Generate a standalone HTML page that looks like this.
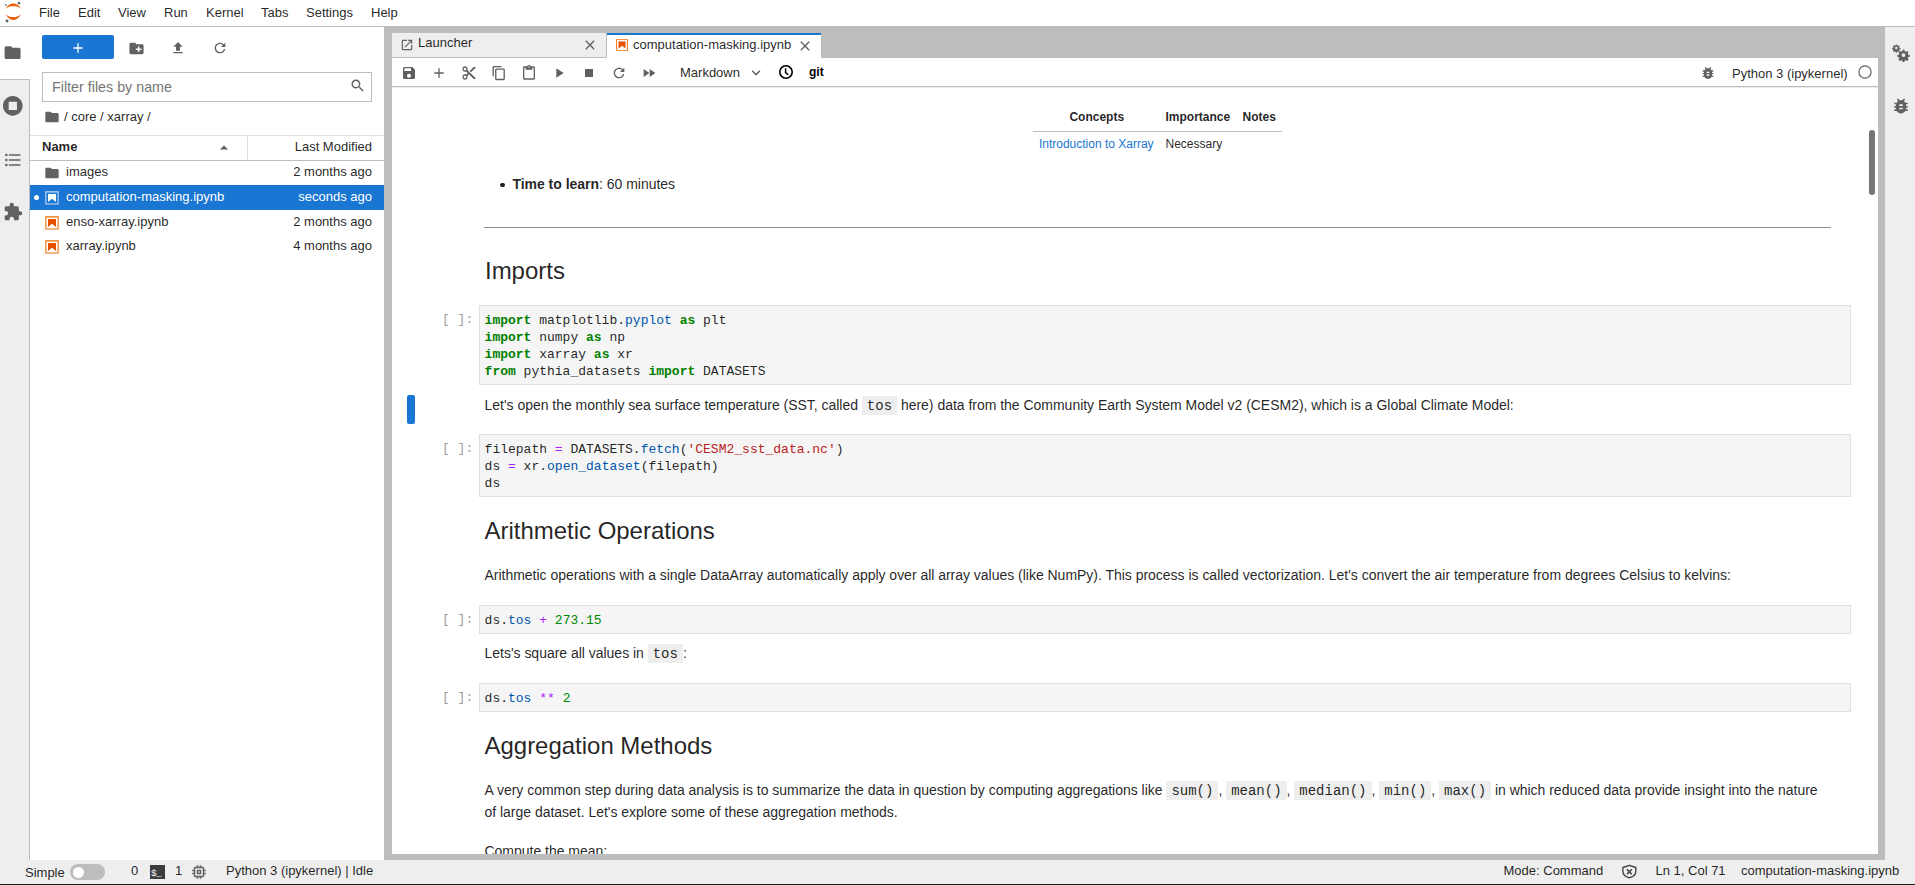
<!DOCTYPE html>
<html><head><meta charset="utf-8">
<style>
*{box-sizing:border-box;}
html,body{margin:0;padding:0;}
body{width:1915px;height:885px;overflow:hidden;position:relative;background:#fff;font-family:"Liberation Sans",sans-serif;color:rgba(0,0,0,0.87);}
.a{position:absolute;}
svg{display:block;}
.ic{fill:#616161;}
/* menu */
#menubar{left:0;top:0;width:1915px;height:27px;background:#fff;border-bottom:1px solid #bdbdbd;}
.mi{position:absolute;top:0;font-size:13px;line-height:26px;color:rgba(0,0,0,0.87);white-space:nowrap;}
/* left sidebar */
#lsb{left:0;top:27px;width:30px;height:833px;background:#eee;}
/* file browser */
#fb{left:30px;top:27px;width:354px;height:833px;background:#fff;}
.t13{font-size:13px;white-space:nowrap;}
/* main */
#dock{left:384px;top:27px;width:1501px;height:833px;background:#bdbdbd;}
#rsb{left:1885px;top:27px;width:30px;height:833px;background:#eee;}
#status{left:0;top:860px;width:1915px;height:24px;background:#eee;}
#blk{left:0;top:884px;width:1915px;height:1px;background:#1a1a1a;}
.md{font-size:14px;white-space:nowrap;color:rgba(0,0,0,0.87);letter-spacing:-0.02px;}
.code{font-family:"Liberation Mono",monospace;font-size:13px;line-height:17px;white-space:pre;color:rgba(0,0,0,0.87);}
.cell{position:absolute;left:479px;width:1372px;background:#f5f5f5;border:1px solid #e0e0e0;}
.pr{position:absolute;left:444px;font-family:"Liberation Mono",monospace;font-size:13px;line-height:17px;color:#9e9e9e;white-space:pre;}
.kw{color:#008000;font-weight:bold;}
.op{color:#aa22ff;}
.pp{color:#0055aa;}
.nu{color:#008800;}
.st{color:#ba2121;}
.ic2{font-family:"Liberation Mono",monospace;font-size:14px;line-height:1;background:#eee;padding:1.7px 5px 1.4px;letter-spacing:0;}
</style></head>
<body>
<div id="menubar" class="a">
<svg class="a" style="left:0;top:0" width="26" height="26" viewBox="0 0 26 26">
 <path d="M5.9 8.8C7.5 5 10.5 3.6 13.35 3.6C16.2 3.6 19.2 5 20.8 8.8C19 6.8 16.3 6.2 13.35 6.2C10.4 6.2 7.7 6.8 5.9 8.8Z" fill="#e9600f"/>
 <path d="M5.9 14.2C7.5 18 10.5 20 13.35 20C16.2 20 19.2 18 20.8 14.2C19 16.3 16.3 17.1 13.35 17.1C10.4 17.1 7.7 16.3 5.9 14.2Z" fill="#e9600f"/>
 <circle cx="19" cy="3.1" r="1.35" fill="#616161"/>
 <circle cx="6" cy="4.9" r="0.9" fill="#767677"/>
 <circle cx="7.1" cy="21" r="1.4" fill="#616161"/>
</svg>
<span class="mi" style="left:39px">File</span>
<span class="mi" style="left:78px">Edit</span>
<span class="mi" style="left:118px">View</span>
<span class="mi" style="left:164px">Run</span>
<span class="mi" style="left:206px">Kernel</span>
<span class="mi" style="left:261px">Tabs</span>
<span class="mi" style="left:306px">Settings</span>
<span class="mi" style="left:371px">Help</span>
</div>
<div id="lsb" class="a">
<div class="a" style="left:0;top:0;width:30px;height:52px;background:#fff"></div>
<div class="a" style="left:0;top:52px;width:30px;height:1px;background:#bdbdbd"></div>
<div class="a" style="left:29px;top:52px;width:1px;height:781px;background:#bdbdbd"></div>
<svg class="a ic" style="left:3.4px;top:15.8px" width="19.2" height="19.2" viewBox="0 0 24 24"><path d="M10 4H4c-1.1 0-1.99.9-1.99 2L2 18c0 1.1.9 2 2 2h16c1.1 0 2-.9 2-2V8c0-1.1-.9-2-2-2h-8l-2-2z"/></svg>
<svg class="a ic" style="left:1px;top:67px" width="23.6" height="23.6" viewBox="0 0 24 24"><path d="M12 2C6.48 2 2 6.48 2 12s4.48 10 10 10 10-4.48 10-10S17.52 2 12 2zm4.2 14.2H7.8V7.8h8.4v8.4z"/></svg>
<svg class="a ic" style="left:3px;top:123px" width="20" height="20" viewBox="0 0 24 24"><path d="M7 5h14v2H7V5zm0 8v-2h14v2H7zM4 4.5c.83 0 1.5.67 1.5 1.5S4.83 7.5 4 7.5 2.5 6.83 2.5 6 3.17 4.5 4 4.5zM4 10.5c.83 0 1.5.67 1.5 1.5s-.67 1.5-1.5 1.5-1.5-.67-1.5-1.5.67-1.5 1.5-1.5zM7 19v-2h14v2H7zm-3-2.5c.83 0 1.5.67 1.5 1.5s-.67 1.5-1.5 1.5-1.5-.67-1.5-1.5.67-1.5 1.5-1.5z"/></svg>
<svg class="a ic" style="left:3px;top:175px" width="20" height="20" viewBox="0 0 24 24"><path d="M20.5 11H19V7c0-1.1-.9-2-2-2h-4V3.5C13 2.12 11.88 1 10.5 1S8 2.12 8 3.5V5H4c-1.1 0-1.99.9-1.99 2v3.8H3.5c1.49 0 2.7 1.21 2.7 2.7s-1.21 2.7-2.7 2.7H2V20c0 1.1.9 2 2 2h3.8v-1.5c0-1.490 1.21-2.7 2.7-2.7 1.49 0 2.7 1.21 2.7 2.7V22H17c1.1 0 2-.9 2-2v-4h1.5c1.38 0 2.5-1.12 2.5-2.5S21.88 11 20.5 11z"/></svg>
</div>
<div id="fb" class="a">
<div class="a" style="left:12px;top:8px;width:72px;height:24px;background:#1976d2;border-radius:2px"></div>
<svg class="a" style="left:40px;top:13px" width="16" height="16" viewBox="0 0 24 24" fill="#fff"><path d="M19 13h-6v6h-2v-6H5v-2h6V5h2v6h6v2z"/></svg>
<svg class="a ic" style="left:97.5px;top:12.5px" width="17" height="17" viewBox="0 0 24 24"><path d="M20 6h-8l-2-2H4c-1.11 0-1.99.89-1.99 2L2 18c0 1.11.89 2 2 2h16c1.11 0 2-.89 2-2V8c0-1.11-.89-2-2-2zm-1 8h-3v3h-2v-3h-3v-2h3V9h2v3h3v2z"/></svg>
<svg class="a ic" style="left:140px;top:12.7px" width="16" height="16" viewBox="0 0 24 24"><path d="M9 16h6v-6h4l-7-7-7 7h4zm-4 2h14v2H5z"/></svg>
<svg class="a ic" style="left:182.3px;top:12.5px" width="16" height="16" viewBox="0 0 18 18"><path d="M9 13.5c-2.49 0-4.5-2.01-4.5-4.5S6.51 4.5 9 4.5c1.24 0 2.36.52 3.170 1.33L10 8h5V3l-1.76 1.76C12.15 3.68 10.66 3 9 3 5.690 3 3.01 5.69 3.01 9S5.69 15 9 15c2.97 0 5.43-2.16 5.9-5h-1.52c-.46 2-2.24 3.5-4.38 3.5z"/></svg>
<div class="a" style="left:12px;top:45px;width:330px;height:30px;border:1px solid #bdbdbd;background:#fff"></div>
<div class="a t13" style="left:22px;top:52px;line-height:16px;color:#757575;font-size:14.3px">Filter files by name</div>
<svg class="a" style="left:320.4px;top:51px" width="15" height="15" viewBox="0 0 18 18" fill="#616161"><path d="M12.1,10.9h-0.7l-0.2-0.2c0.8-0.9,1.3-2.2,1.3-3.5c0-3-2.4-5.4-5.4-5.4S1.8,4.2,1.8,7.1c0,3,2.4,5.4,5.4,5.4 c1.3,0,2.5-0.5,3.5-1.3l0.2,0.2v0.7l4.1,4.1l1.2-1.2L12.1,10.9z M7.1,10.9c-2.1,0-3.7-1.7-3.7-3.7s1.7-3.7,3.7-3.7s3.7,1.7,3.7,3.7 S9.2,10.9,7.1,10.9z"/></svg>
<svg class="a ic" style="left:14px;top:81.7px" width="16" height="16" viewBox="0 0 24 24"><path d="M10 4H4c-1.1 0-1.99.9-1.99 2L2 18c0 1.1.9 2 2 2h16c1.1 0 2-.9 2-2V8c0-1.1-.9-2-2-2h-8l-2-2z"/></svg>
<div class="a t13" style="left:34px;top:82px;line-height:16px">/ core / xarray /</div>
<div class="a" style="left:0;top:108px;width:354px;height:1px;background:#e0e0e0"></div>
<div class="a t13" style="left:12px;top:112px;line-height:16px;font-weight:bold">Name</div>
<svg class="a" style="left:189px;top:116px" width="10" height="10" viewBox="0 0 10 10" fill="#616161"><path d="M1 6.5L5 2.5L9 6.5Z"/></svg>
<div class="a" style="left:217px;top:109px;width:1px;height:24px;background:#e0e0e0"></div>
<div class="a t13" style="right:12px;top:112px;line-height:16px">Last Modified</div>
<div class="a" style="left:0;top:133px;width:354px;height:1px;background:#bdbdbd"></div>
<!-- rows -->
<svg class="a ic" style="left:14px;top:138px" width="16" height="16" viewBox="0 0 24 24"><path d="M10 4H4c-1.1 0-1.99.9-1.99 2L2 18c0 1.1.9 2 2 2h16c1.1 0 2-.9 2-2V8c0-1.1-.9-2-2-2h-8l-2-2z"/></svg>
<div class="a t13" style="left:36px;top:137px;line-height:16px">images</div>
<div class="a t13" style="right:12px;top:137px;line-height:16px">2 months ago</div>
<div class="a" style="left:0;top:158px;width:354px;height:25px;background:#1976d2"></div>
<div class="a" style="left:4px;top:168px;width:5px;height:5px;border-radius:50%;background:#fff"></div>
<svg class="a" style="left:14px;top:162.5px" width="16" height="16" viewBox="0 0 22 22" fill="#fff"><path d="M18.7 3.3v15.4H3.3V3.3h15.4m1.5-1.5H1.8v18.3h18.3l.1-18.3z" opacity="0.75"/><path d="M16.5 16.5l-5.4-4.3-5.600 4.3v-11h11z"/></svg>
<div class="a t13" style="left:36px;top:162px;line-height:16px;color:#fff">computation-masking.ipynb</div>
<div class="a t13" style="right:12px;top:162px;line-height:16px;color:#fff">seconds ago</div>
<svg class="a" style="left:14px;top:188px" width="16" height="16" viewBox="0 0 22 22" fill="#ef6c00"><path d="M18.7 3.3v15.4H3.3V3.3h15.4m1.5-1.5H1.8v18.3h18.3l.1-18.3z"/><path d="M16.5 16.5l-5.4-4.3-5.6 4.3v-11h11z" fill="#e65100"/></svg>
<div class="a t13" style="left:36px;top:187px;line-height:16px">enso-xarray.ipynb</div>
<div class="a t13" style="right:12px;top:187px;line-height:16px">2 months ago</div>
<svg class="a" style="left:14px;top:212px" width="16" height="16" viewBox="0 0 22 22" fill="#ef6c00"><path d="M18.7 3.3v15.4H3.3V3.3h15.4m1.5-1.5H1.8v18.3h18.3l.1-18.3z"/><path d="M16.5 16.5l-5.4-4.3-5.6 4.3v-11h11z" fill="#e65100"/></svg>
<div class="a t13" style="left:36px;top:211px;line-height:16px">xarray.ipynb</div>
<div class="a t13" style="right:12px;top:211px;line-height:16px">4 months ago</div>
</div>
<div id="dock" class="a">
<!-- tabs -->
<div class="a" style="left:8px;top:6px;width:215px;height:25px;background:#eee;border-right:1px solid #bdbdbd;border-bottom:1px solid #bdbdbd"></div>
<svg class="a ic" style="left:15.5px;top:11px" width="14" height="14" viewBox="0 0 24 24"><path d="M19 19H5V5h7V3H5a2 2 0 00-2 2v14a2 2 0 002 2h14c1.1 0 2-.9 2-2v-7h-2v7zM14 3v2h3.59l-9.83 9.83 1.41 1.41L19 6.41V10h2V3h-7z"/></svg>
<div class="a t13" style="left:34px;top:8px;line-height:16px">Launcher</div>
<svg class="a ic" style="left:198px;top:10px" width="16" height="16" viewBox="0 0 24 24"><path d="M19 6.41L17.59 5 12 10.59 6.41 5 5 6.41 10.59 12 5 17.59 6.41 19 12 13.59 17.59 19 19 17.59 13.59 12z"/></svg>
<div class="a" style="left:223px;top:6px;width:214px;height:26px;background:#fff;border-top:2px solid #1976d2"></div>
<svg class="a" style="left:230.5px;top:11px" width="14" height="14" viewBox="0 0 22 22" fill="#ef6c00"><path d="M18.7 3.3v15.4H3.3V3.3h15.4m1.5-1.5H1.8v18.3h18.3l.1-18.3z"/><path d="M16.5 16.5l-5.4-4.3-5.6 4.3v-11h11z" fill="#e65100"/></svg>
<div class="a t13" style="left:249px;top:10px;line-height:16px">computation-masking.ipynb</div>
<svg class="a ic" style="left:413px;top:11px" width="16" height="16" viewBox="0 0 24 24"><path d="M19 6.41L17.59 5 12 10.59 6.41 5 5 6.41 10.59 12 5 17.59 6.41 19 12 13.59 17.59 19 19 17.59 13.59 12z"/></svg>
<!-- panel -->
<div id="nb" class="a" style="left:8px;top:31px;width:1486px;height:796px;background:#fff;overflow:hidden">
<div class="a" style="left:0;top:0;width:1486px;height:29px;border-bottom:1px solid #bdbdbd;box-shadow:0 0 2px rgba(0,0,0,0.24);background:#fff"></div>
<svg class="a ic" style="left:9px;top:7px" width="16" height="16" viewBox="0 0 24 24"><path d="M17 3H5c-1.11 0-2 .9-2 2v14c0 1.1.89 2 2 2h14c1.1 0 2-.9 2-2V7l-4-4zm-5 16c-1.66 0-3-1.34-3-3s1.34-3 3-3 3 1.34 3 3-1.34 3-3 3zm3-10H5V5h10v4z"/></svg>
<svg class="a ic" style="left:39px;top:7px" width="16" height="16" viewBox="0 0 24 24"><path d="M19 13h-6v6h-2v-6H5v-2h6V5h2v6h6v2z"/></svg>
<svg class="a ic" style="left:69px;top:7px" width="16" height="16" viewBox="0 0 24 24"><path d="M9.64 7.64c.23-.5.36-1.05.36-1.64 0-2.21-1.79-4-4-4S2 3.79 2 6s1.79 4 4 4c.59 0 1.14-.13 1.64-.36L10 12l-2.36 2.36C7.14 14.13 6.59 14 6 14c-2.21 0-4 1.79-4 4s1.79 4 4 4 4-1.79 4-4c0-.59-.13-1.14-.36-1.64L12 14l7 7h3v-1L9.64 7.64zM6 8c-1.1 0-2-.89-2-2s.9-2 2-2 2 .89 2 2-.9 2-2 2zm0 12c-1.1 0-2-.89-2-2s.9-2 2-2 2 .89 2 2-.9 2-2 2zm6-7.5c-.28 0-.5-.22-.5-.5s.22-.5.5-.5.5.22.5.5-.22.5-.5.5zM19 3l-6 6 2 2 7-7V3z"/></svg>
<svg class="a ic" style="left:98.5px;top:7px" width="16" height="16" viewBox="0 0 18 18"><path d="M11.9,1H3.2C2.4,1,1.7,1.7,1.7,2.5v10.2h1.5V2.5h8.7V1z M14.1,3.9h-8c-0.8,0-1.5,0.7-1.5,1.5v10.2c0,0.8,0.7,1.5,1.5,1.5h8 c0.8,0,1.5-0.7,1.5-1.5V5.4C15.5,4.6,14.9,3.9,14.1,3.9z M14.1,15.5h-8V5.4h8V15.5z"/></svg>
<svg class="a ic" style="left:129px;top:6.5px" width="16" height="16" viewBox="0 0 24 24"><path d="M19 2h-4.18C14.4.84 13.3 0 12 0c-1.3 0-2.4.84-2.82 2H5c-1.1 0-2 .9-2 2v16c0 1.1.9 2 2 2h14c1.1 0 2-.9 2-2V4c0-1.1-.9-2-2-2zm-7 0c.55 0 1 .45 1 1s-.45 1-1 1-1-.45-1-1 .45-1 1-1zm7 18H5V4h2v3h10V4h2v16z"/></svg>
<svg class="a ic" style="left:158.7px;top:7px" width="16" height="16" viewBox="0 0 24 24"><path d="M8 5v14l11-7z"/></svg>
<svg class="a ic" style="left:189px;top:7px" width="16" height="16" viewBox="0 0 24 24"><path d="M6 6h12v12H6z"/></svg>
<svg class="a ic" style="left:219px;top:6.5px" width="16" height="16" viewBox="0 0 18 18"><path d="M9 13.5c-2.49 0-4.5-2.01-4.5-4.5S6.51 4.5 9 4.5c1.24 0 2.36.52 3.17 1.33L10 8h5V3l-1.76 1.76C12.15 3.68 10.66 3 9 3 5.69 3 3.01 5.69 3.01 9S5.69 15 9 15c2.97 0 5.43-2.16 5.9-5h-1.52c-.46 2-2.24 3.5-4.38 3.5z"/></svg>
<svg class="a ic" style="left:249px;top:7px" width="16" height="16" viewBox="0 0 24 24"><path d="M4 18l8.5-6L4 6v12zm9-12v12l8.5-6L13 6z"/></svg>
<svg class="a ic" style="left:1308px;top:7px" width="16" height="16" viewBox="0 0 24 24"><path d="M20 8h-2.81c-.45-.78-1.07-1.45-1.82-1.96L17 4.41 15.59 3l-2.17 2.17C12.96 5.06 12.49 5 12 5c-.49 0-.96.06-1.41.17L8.41 3 7 4.41l1.62 1.63C7.88 6.550 7.26 7.22 6.81 8H4v2h2.09c-.05.33-.09.66-.09 1v1H4v2h2v1c0 .34.04.67.09 1H4v2h2.81c1.04 1.79 2.97 3 5.19 3s4.15-1.21 5.19-3H20v-2h-2.09c.05-.33.09-.66.09-1v-1h2v-2h-2v-1c0-.34-.04-.67-.09-1H20V8zm-6 8h-4v-2h4v2zm0-4h-4v-2h4v2z"/></svg>
<div class="a t13" style="left:288px;top:6.5px;line-height:16px">Markdown</div>
<svg class="a ic" style="left:356px;top:6.699999999999999px" width="16" height="16" viewBox="0 0 18 18"><path d="M5.2,5.9L9,9.7l3.8-3.8l1.2,1.2l-4.9,5l-4.9-5L5.2,5.9z" transform="translate(0 0) scale(1)"/></svg>
<svg class="a" style="left:386px;top:6.4px" width="16" height="16" viewBox="0 0 16 16"><circle cx="8" cy="8" r="6.2" fill="none" stroke="#000" stroke-width="1.6"/><path d="M7.6 4.2V8.6L10.2 10.6" fill="none" stroke="#000" stroke-width="1.5"/></svg>
<div class="a t13" style="left:417px;top:5.5px;line-height:16px;font-weight:bold;color:#000;font-size:12px">git</div>
<div class="a t13" style="left:1340px;top:8px;line-height:16px">Python 3 (ipykernel)</div>
<svg class="a" style="left:1464.75px;top:6.099999999999994px" width="16" height="16" viewBox="0 0 16 16"><circle cx="8" cy="8" r="6.1" fill="none" stroke="#616161" stroke-width="1.2"/></svg>
<div class="a" style="left:1477px;top:72px;width:6px;height:65px;border-radius:3px;background:#757575"></div>
<div class="a" style="left:641px;top:73px;width:249px;height:1px;background:#bdbdbd"></div>
<div class="a" style="left:677.4000000000001px;top:52px;font-size:12px;line-height:14px;font-weight:bold;white-space:nowrap">Concepts</div>
<div class="a" style="left:773.5px;top:52px;font-size:12px;line-height:14px;font-weight:bold;white-space:nowrap">Importance</div>
<div class="a" style="left:850.5px;top:52px;font-size:12px;line-height:14px;font-weight:bold;white-space:nowrap">Notes</div>
<div class="a" style="left:646.9px;top:79px;font-size:12px;line-height:14px;white-space:nowrap;color:#1976d2">Introduction to Xarray</div>
<div class="a" style="left:773.5px;top:79px;font-size:12px;line-height:14px;white-space:nowrap">Necessary</div>
<div class="a" style="left:108.39999999999998px;top:124.5px;width:4.5px;height:4.5px;border-radius:50%;background:rgba(0,0,0,0.87)"></div>
<div class="a md" style="left:120.39999999999998px;top:118px;line-height:16px"><b>Time to learn</b>: 60 minutes</div>
<div class="a" style="left:92px;top:169px;width:1347px;height:1px;background:#8f8f8f"></div>
<div class="a md" style="left:93px;top:199px;font-size:24px;line-height:28px">Imports</div>
<div class="cell" style="top:247px;height:80px;left:87px;width:1372px"></div><div class="pr" style="left:50px;top:253px">[ ]:</div><div class="a code" style="left:92.60000000000002px;top:254px"><span class="kw">import</span> matplotlib.<span class="pp">pyplot</span> <span class="kw">as</span> plt
<span class="kw">import</span> numpy <span class="kw">as</span> np
<span class="kw">import</span> xarray <span class="kw">as</span> xr
<span class="kw">from</span> pythia_datasets <span class="kw">import</span> DATASETS</div>
<div class="a" style="left:15px;top:337px;width:8px;height:29px;border-radius:2px;background:#1976d2"></div>
<div class="a md" style="left:92.5px;top:339px;line-height:16px">Let's open the monthly sea surface temperature (SST, called <span class="ic2">tos</span> here) data from the Community Earth System Model v2 (CESM2), which is a Global Climate Model:</div>
<div class="cell" style="top:376px;height:63px;left:87px;width:1372px"></div><div class="pr" style="left:50px;top:382px">[ ]:</div><div class="a code" style="left:92.60000000000002px;top:383px">filepath <span class="op">=</span> DATASETS.<span class="pp">fetch</span>(<span class="st">'CESM2_sst_data.nc'</span>)
ds <span class="op">=</span> xr.<span class="pp">open_dataset</span>(filepath)
ds</div>
<div class="a md" style="left:92.5px;top:459px;font-size:24px;line-height:28px">Arithmetic Operations</div>
<div class="a md" style="left:92.5px;top:509px;line-height:16px">Arithmetic operations with a single DataArray automatically apply over all array values (like NumPy). This process is called vectorization. Let's convert the air temperature from degrees Celsius to kelvins:</div>
<div class="cell" style="top:547px;height:29px;left:87px;width:1372px"></div><div class="pr" style="left:50px;top:553px">[ ]:</div><div class="a code" style="left:92.60000000000002px;top:554px">ds.<span class="pp">tos</span> <span class="op">+</span> <span class="nu">273.15</span></div>
<div class="a md" style="left:92.5px;top:587px;line-height:16px">Lets's square all values in <span class="ic2">tos</span>:</div>
<div class="cell" style="top:625px;height:29px;left:87px;width:1372px"></div><div class="pr" style="left:50px;top:631px">[ ]:</div><div class="a code" style="left:92.60000000000002px;top:632px">ds.<span class="pp">tos</span> <span class="op">**</span> <span class="nu">2</span></div>
<div class="a md" style="left:92.5px;top:674px;font-size:24px;line-height:28px">Aggregation Methods</div>
<div class="a md" style="left:92.5px;top:721px;line-height:22px">A very common step during data analysis is to summarize the data in question by computing aggregations like <span class="ic2">sum()</span>, <span class="ic2">mean()</span>, <span class="ic2">median()</span>, <span class="ic2">min()</span>, <span class="ic2">max()</span> in which reduced data provide insight into the nature</div>
<div class="a md" style="left:92.5px;top:742.5px;line-height:22px">of large dataset. Let's explore some of these aggregation methods.</div>
<div class="a md" style="left:92.5px;top:785px;line-height:16px">Compute the mean:</div>
</div>
</div>
<div id="rsb" class="a">
<svg class="a" style="left:6px;top:15px" width="20" height="20" viewBox="0 0 20 20" fill="#616161">
<g transform="translate(5.3 6)"><path d="M-0.6-3.6h1.2l.25 1.05 .75.31 .92-.57 .85.85-.57.92.31.75 1.05.25v1.2l-1.05.25-.31.75.57.92-.85.85-.92-.57-.75.31-.25 1.05h-1.2l-.25-1.05-.75-.31-.92.57-.85-.85.57-.92-.31-.75-1.05-.25v-1.2l1.05-.25.31-.75-.57-.92.85-.85.92.57.75-.31z"/><circle r="1.25" fill="#eee"/></g>
<g transform="translate(12.5 13.1) scale(1.5)"><path d="M-0.6-3.6h1.2l.25 1.05 .75.31 .92-.57 .85.85-.57.92.31.75 1.05.25v1.2l-1.05.25-.31.75.57.92-.85.85-.92-.57-.75.31-.25 1.05h-1.2l-.25-1.05-.75-.31-.92.57-.85-.85.57-.92-.31-.75-1.05-.25v-1.2l1.05-.25.31-.75-.57-.92.85-.85.92.57.75-.31z"/><circle r="1.25" fill="#eee"/></g>
</svg>
<svg class="a ic" style="left:6px;top:69px" width="20" height="20" viewBox="0 0 24 24"><path d="M20 8h-2.81c-.45-.78-1.07-1.45-1.82-1.96L17 4.41 15.59 3l-2.17 2.17C12.96 5.06 12.49 5 12 5c-.49 0-.96.06-1.41.17L8.41 3 7 4.41l1.62 1.63C7.88 6.55 7.26 7.22 6.81 8H4v2h2.09c-.05.33-.09.66-.09 1v1H4v2h2v1c0 .34.04.67.09 1H4v2h2.81c1.04 1.79 2.97 3 5.19 3s4.15-1.21 5.19-3H20v-2h-2.09c.05-.33.09-.66.09-1v-1h2v-2h-2v-1c0-.34-.04-.67-.09-1H20V8zm-6 8h-4v-2h4v2zm0-4h-4v-2h4v2z"/></svg>
</div>
<div id="status" class="a">
<div class="a t13" style="left:25px;top:5px;line-height:16px">Simple</div>
<div class="a" style="left:70px;top:4px;width:35px;height:16px;border-radius:8px;background:#bdbdbd"></div>
<div class="a" style="left:72.5px;top:6.5px;width:11px;height:11px;border-radius:50%;background:#fff"></div>
<div class="a t13" style="left:131px;top:3px;line-height:16px">0</div>
<div class="a" style="left:149.5px;top:4.7px;width:15px;height:14.5px;background:#3b3b3b"></div>
<div class="a" style="left:151px;top:7.5px;font-family:'Liberation Mono',monospace;font-size:9.5px;line-height:12px;color:#fff;letter-spacing:-0.8px">$_</div>
<div class="a t13" style="left:175px;top:3px;line-height:16px">1</div>
<svg class="a ic" style="left:190px;top:3px" width="18" height="18" viewBox="0 0 24 24"><path d="M15 9H9v6h6V9zm-2 4h-2v-2h2v2zm8-2V9h-2V7c0-1.1-.9-2-2-2h-2V3h-2v2h-2V3H9v2H7c-1.1 0-2 .9-2 2v2H3v2h2v2H3v2h2v2c0 1.1.9 2 2 2h2v2h2v-2h2v2h2v-2h2c1.1 0 2-.9 2-2v-2h2v-2h-2v-2h2zm-4 6H7V7h10v10z"/></svg>
<div class="a t13" style="left:226px;top:3px;line-height:16px">Python 3 (ipykernel) | Idle</div>
<div class="a t13" style="left:1503.5px;top:3px;line-height:16px">Mode: Command</div>
<svg class="a" style="left:1621px;top:3.5px" width="16" height="16" viewBox="0 0 16 16"><path d="M8.3 1.3L1.9 3.5V7.2C1.9 10.4 4.6 12.8 8.3 13.7C12 12.8 14.8 10.4 14.8 7.2V3.5Z" fill="none" stroke="#424242" stroke-width="1.4" stroke-linejoin="round"/><path d="M5.9 5.4L10.8 10.2M10.8 5.4L5.9 10.2" stroke="#424242" stroke-width="1.5"/></svg>
<div class="a t13" style="left:1655.5px;top:3px;line-height:16px">Ln 1, Col 71</div>
<div class="a t13" style="left:1741px;top:3px;line-height:16px">computation-masking.ipynb</div>
</div>
<div id="blk" class="a"></div>
</body></html>
